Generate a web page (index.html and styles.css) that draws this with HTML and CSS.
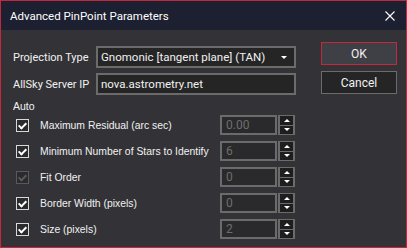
FILE: index.html
```html
<!DOCTYPE html>
<html lang="en">
<head>
  <meta charset="UTF-8">
  <title>Advanced PinPoint Parameters</title>
  <link rel="stylesheet" href="styles.css">
</head>
<body>
  <div class="window">
    <div class="titlebar">
      <span class="title">Advanced PinPoint Parameters</span>
      <svg class="close" width="10" height="10" viewBox="0 0 10 10">
        <path d="M0.5 0.5 L9.5 9.5 M9.5 0.5 L0.5 9.5" stroke="#ffffff" stroke-width="1.1"/>
      </svg>
    </div>

    <div class="content">
      <div class="form">
        <div class="field-row">
          <label class="field-label">Projection Type</label>
          <div class="combo">
            <span>Gnomonic [tangent plane] (TAN)</span>
            <span class="combo-arrow"></span>
          </div>
        </div>
        <div class="field-row">
          <label class="field-label">AllSky Server IP</label>
          <div class="textbox">nova.astrometry.net</div>
        </div>

        <div class="auto-title">Auto</div>

        <div class="auto-row">
          <span class="check checked"></span>
          <span class="auto-label">Maximum Residual (arc sec)</span>
          <div class="spinner">
            <div class="spin-value">0.00</div>
            <div class="spin-buttons"><span class="up"></span><span class="down"></span></div>
          </div>
        </div>
        <div class="auto-row">
          <span class="check checked"></span>
          <span class="auto-label">Minimum Number of Stars to Identify</span>
          <div class="spinner">
            <div class="spin-value">6</div>
            <div class="spin-buttons"><span class="up"></span><span class="down"></span></div>
          </div>
        </div>
        <div class="auto-row">
          <span class="check checked disabled"></span>
          <span class="auto-label">Fit Order</span>
          <div class="spinner">
            <div class="spin-value">0</div>
            <div class="spin-buttons"><span class="up"></span><span class="down"></span></div>
          </div>
        </div>
        <div class="auto-row">
          <span class="check checked"></span>
          <span class="auto-label">Border Width (pixels)</span>
          <div class="spinner">
            <div class="spin-value">0</div>
            <div class="spin-buttons"><span class="up"></span><span class="down"></span></div>
          </div>
        </div>
        <div class="auto-row">
          <span class="check checked"></span>
          <span class="auto-label">Size (pixels)</span>
          <div class="spinner">
            <div class="spin-value">2</div>
            <div class="spin-buttons"><span class="up"></span><span class="down"></span></div>
          </div>
        </div>
      </div>

      <div class="buttons">
        <button class="btn btn-default">OK</button>
        <button class="btn">Cancel</button>
      </div>
    </div>
  </div>
</body>
</html>
```

FILE: styles.css
```css
* {
  margin: 0;
  padding: 0;
  box-sizing: border-box;
}

body {
  background: #333337;
  font-family: Roboto, 'Noto Sans', sans-serif;
  color: #f1f1f1;
}

.window {
  width: 407px;
  height: 248px;
  border: 1px solid #c4283e;
  background: #333337;
  overflow: hidden;
}

.titlebar {
  height: 29px;
  background: #1c2030;
  display: flex;
  align-items: center;
  justify-content: space-between;
  padding: 0 11px 0 9px;
}

.title {
  font-size: 11.5px;
  color: #ffffff;
}

.content {
  display: flex;
  padding-left: 12px;
}

.form {
  width: 283px;
  padding-top: 16px;
}

.field-row {
  display: grid;
  grid-template-columns: 83px 200px;
  align-items: center;
  margin-bottom: 5px;
}

.field-label {
  font-size: 11px;
  color: #f1f1f1;
  white-space: nowrap;
}

.combo,
.textbox {
  height: 22px;
  border: 2px solid #6b6b6b;
  background: #252526;
  font-size: 11.5px;
  color: #f1f1f1;
  display: flex;
  align-items: center;
  padding-left: 3px;
  white-space: nowrap;
}

.combo {
  justify-content: space-between;
  padding-right: 7px;
}

.combo-arrow {
  width: 0;
  height: 0;
  border-left: 3px solid transparent;
  border-right: 3px solid transparent;
  border-top: 3px solid #ffffff;
}

.auto-title {
  font-family: 'Liberation Sans', Arial, sans-serif;
  font-size: 10.5px;
  margin-top: 4px;
  height: 15px;
}

.auto-row {
  display: flex;
  align-items: center;
  height: 20px;
  margin-bottom: 6px;
}

.check {
  width: 13px;
  height: 13px;
  margin-left: 3px;
  border: 1px solid #d8d8d8;
  background: #2b2b2e;
  position: relative;
}

.check.checked::after {
  content: '';
  position: absolute;
  left: 3px;
  top: 1px;
  width: 3px;
  height: 6px;
  border-right: 2px solid #ffffff;
  border-bottom: 2px solid #ffffff;
  transform: rotate(45deg);
}

.check.disabled {
  border-color: #5a5a5c;
}

.check.disabled::after {
  border-color: #5a5a5c;
}

.auto-label {
  font-family: 'Liberation Sans', Arial, sans-serif;
  font-size: 10.4px;
  color: #f1f1f1;
  margin-left: 11px;
  width: 180px;
  white-space: nowrap;
}

.spinner {
  display: flex;
  height: 20px;
}

.spin-value {
  width: 57px;
  border: 2px solid #6b6b6b;
  background: #2a2a2c;
  color: #6e6e6e;
  font-size: 12px;
  display: flex;
  align-items: center;
  padding-left: 4px;
}

.spin-buttons {
  width: 17px;
  margin-left: 1px;
  background: #6b6b6b;
  padding: 1px 2px;
  display: flex;
  flex-direction: column;
  gap: 1px;
}

.spin-buttons span {
  flex: 1;
  background: #1e1e1e;
  display: flex;
  align-items: center;
  justify-content: center;
}

.spin-buttons .up::before {
  content: '';
  border-left: 3px solid transparent;
  border-right: 3px solid transparent;
  border-bottom: 3px solid #ffffff;
}

.spin-buttons .down::before {
  content: '';
  border-left: 3px solid transparent;
  border-right: 3px solid transparent;
  border-top: 3px solid #ffffff;
}

.buttons {
  margin-left: 25px;
  padding-top: 12px;
  display: flex;
  flex-direction: column;
  gap: 6px;
}

.btn {
  width: 76px;
  height: 23px;
  border: 1px solid #6b6b6b;
  background: #252526;
  color: #f1f1f1;
  font-family: Roboto, 'Noto Sans', sans-serif;
  font-size: 12px;
}

.btn-default {
  border-color: #c4283e;
  background: #3f3f46;
}
```
